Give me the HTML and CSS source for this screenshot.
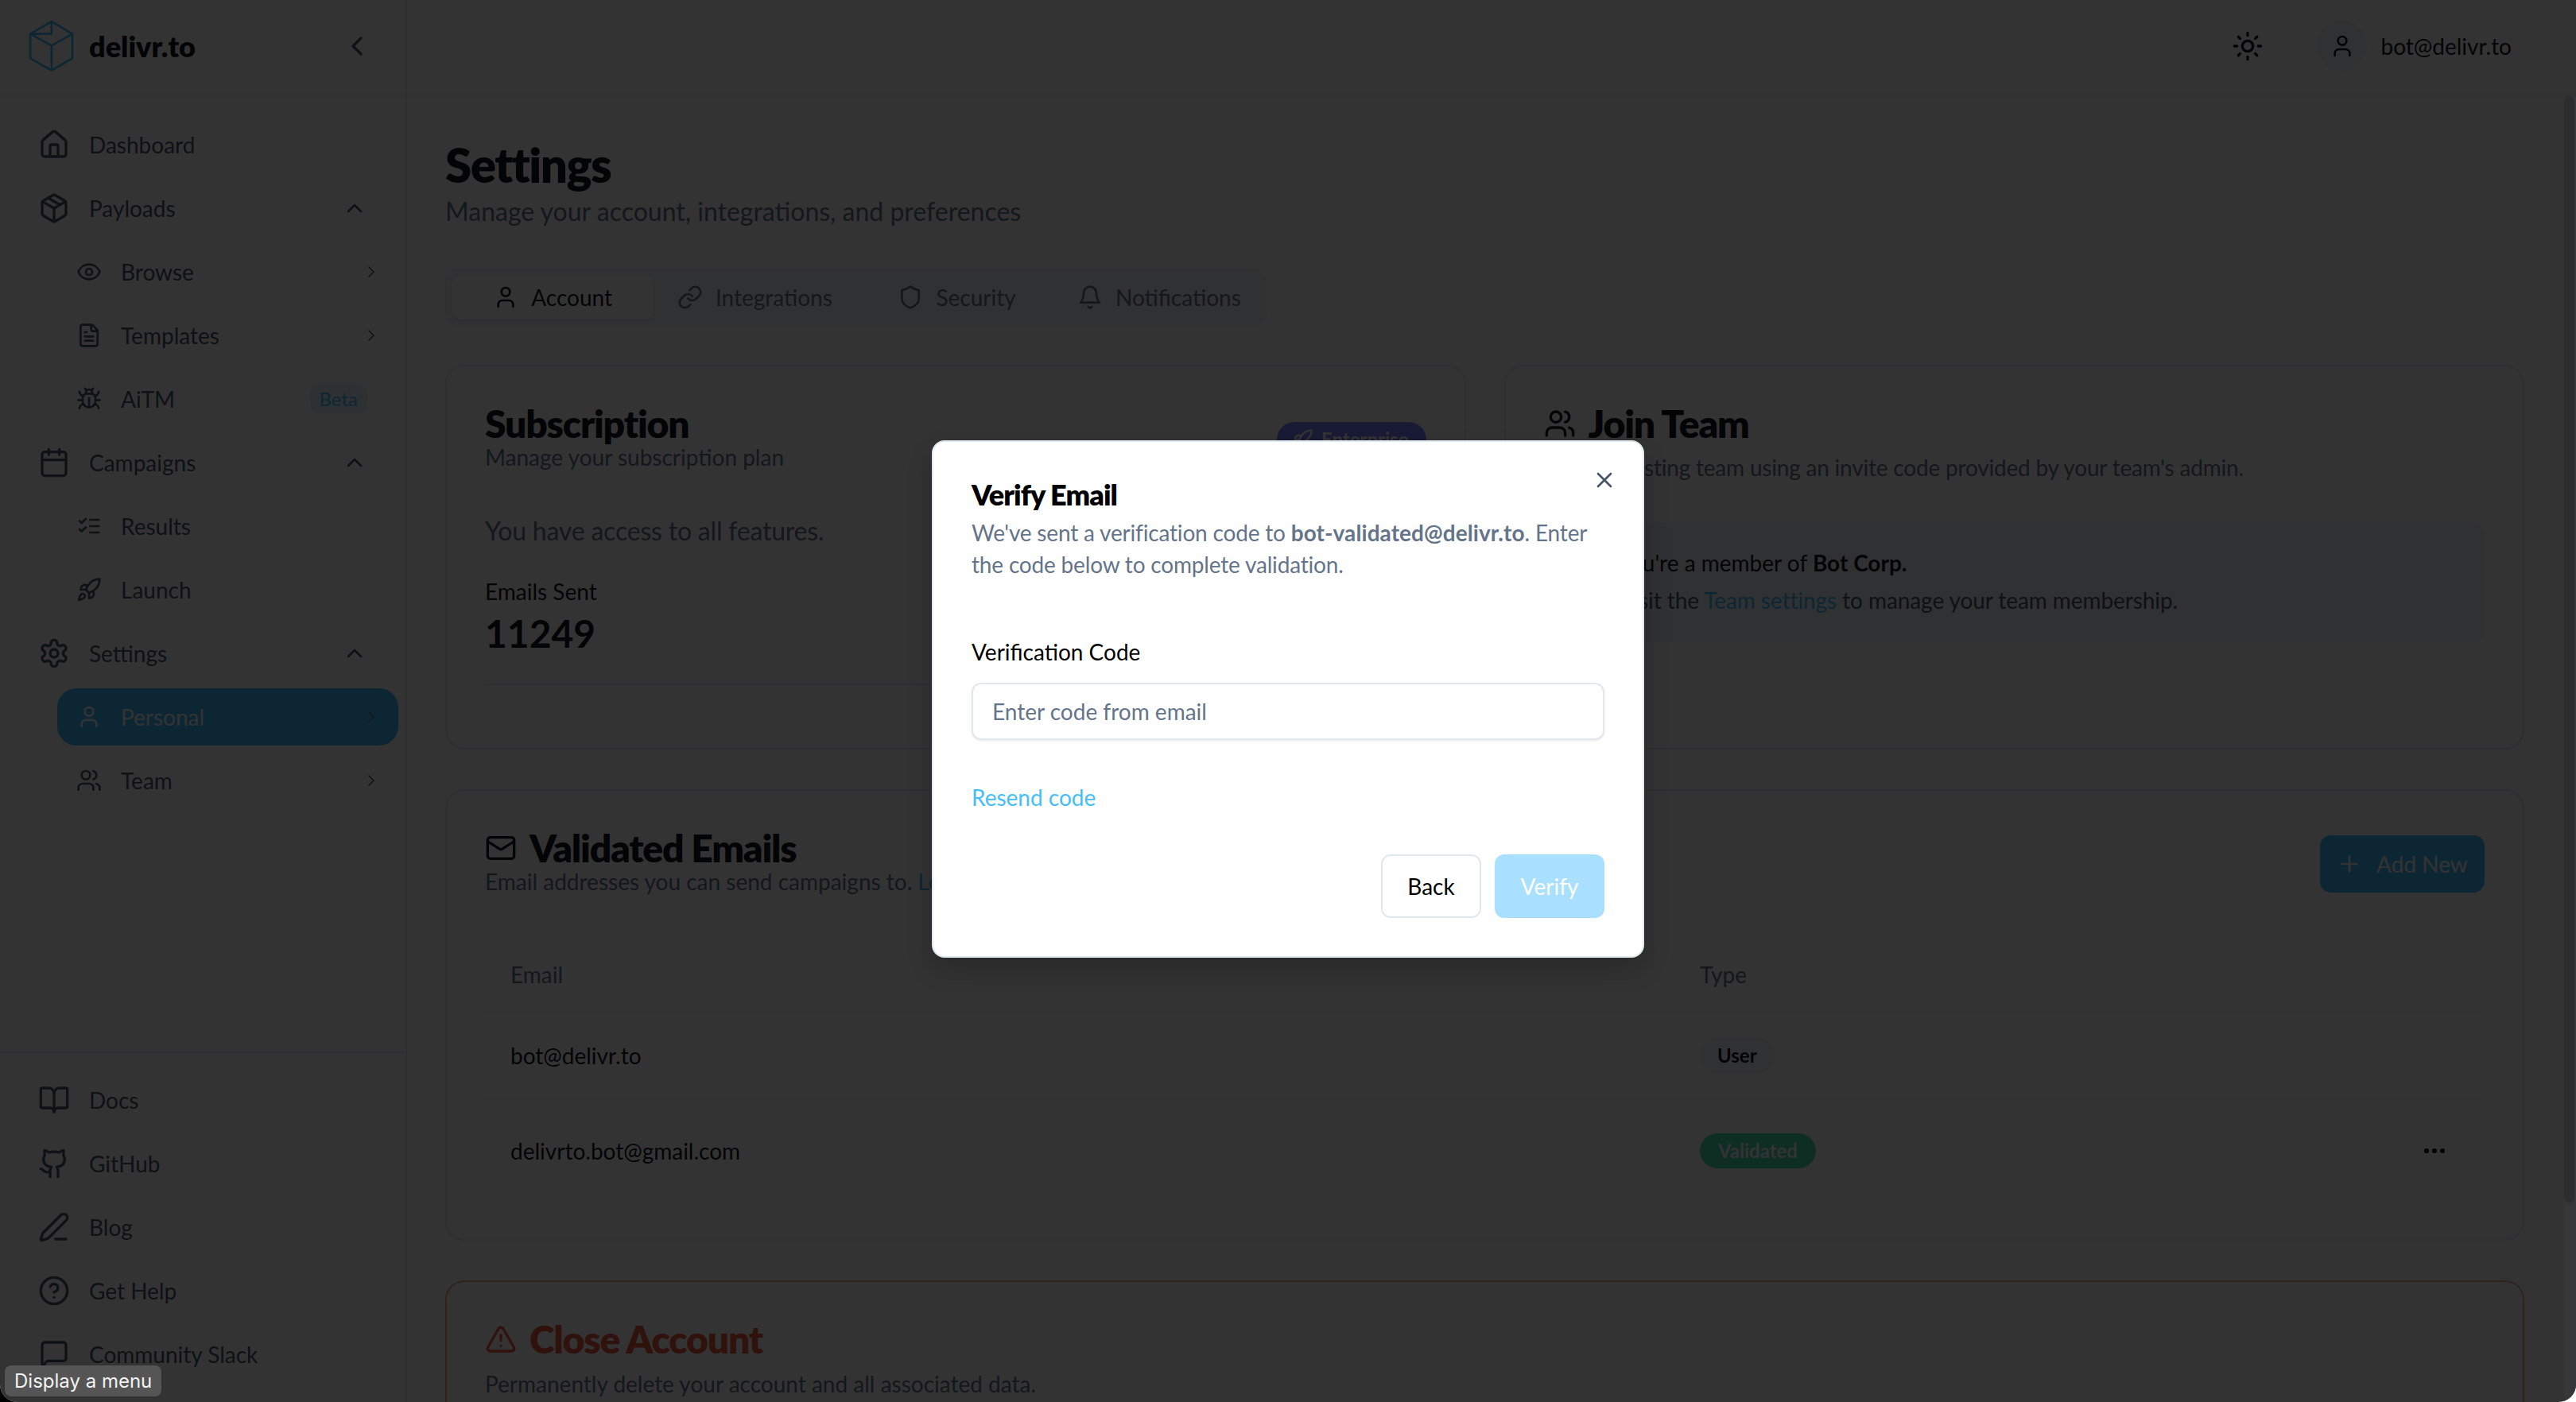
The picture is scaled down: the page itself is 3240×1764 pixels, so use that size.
FILE: index.html
```html
<!DOCTYPE html>
<html lang="en">
<head>
    <meta charset="UTF-8">
    <meta name="viewport" content="width=device-width, initial-scale=1.0">
    <title>Settings - delivr.to</title>
    <link rel="stylesheet" href="styles.css">
</head>
<body>
    <!-- Icon sprite -->
    <svg class="sprite" xmlns="http://www.w3.org/2000/svg">
        <symbol id="i-home" viewBox="0 0 24 24"><path d="M15 21v-8a1 1 0 0 0-1-1h-4a1 1 0 0 0-1 1v8"/><path d="M3 10a2 2 0 0 1 .709-1.528l7-5.999a2 2 0 0 1 2.582 0l7 5.999A2 2 0 0 1 21 10v9a2 2 0 0 1-2 2H5a2 2 0 0 1-2-2z"/></symbol>
        <symbol id="i-package" viewBox="0 0 24 24"><path d="M11 21.73a2 2 0 0 0 2 0l7-4A2 2 0 0 0 21 16V8a2 2 0 0 0-1-1.73l-7-4a2 2 0 0 0-2 0l-7 4A2 2 0 0 0 3 8v8a2 2 0 0 0 1 1.73z"/><path d="M12 22V12"/><path d="m3.3 7 8.7 5 8.7-5"/><path d="m7.5 4.27 9 5.15"/></symbol>
        <symbol id="i-eye" viewBox="0 0 24 24"><path d="M2.062 12.348a1 1 0 0 1 0-.696 10.75 10.75 0 0 1 19.876 0 1 1 0 0 1 0 .696 10.75 10.75 0 0 1-19.876 0"/><circle cx="12" cy="12" r="3"/></symbol>
        <symbol id="i-file" viewBox="0 0 24 24"><path d="M15 2H6a2 2 0 0 0-2 2v16a2 2 0 0 0 2 2h12a2 2 0 0 0 2-2V7Z"/><path d="M14 2v4a2 2 0 0 0 2 2h4"/><path d="M10 9H8"/><path d="M16 13H8"/><path d="M16 17H8"/></symbol>
        <symbol id="i-bug" viewBox="0 0 24 24"><path d="m8 2 1.88 1.88"/><path d="M14.12 3.88 16 2"/><path d="M9 7.13v-1a3.003 3.003 0 1 1 6 0v1"/><path d="M12 20c-3.3 0-6-2.7-6-6v-3a4 4 0 0 1 4-4h4a4 4 0 0 1 4 4v3c0 3.3-2.7 6-6 6"/><path d="M12 20v-9"/><path d="M6.53 9C4.6 8.8 3 7.1 3 5"/><path d="M6 13H2"/><path d="M3 21c0-2.1 1.7-3.9 3.8-4"/><path d="M20.97 5c0 2.1-1.6 3.8-3.5 4"/><path d="M22 13h-4"/><path d="M17.2 17c2.1.1 3.8 1.9 3.8 4"/></symbol>
        <symbol id="i-calendar" viewBox="0 0 24 24"><path d="M8 2v4"/><path d="M16 2v4"/><rect x="3" y="4" width="18" height="18" rx="2"/><path d="M3 10h18"/></symbol>
        <symbol id="i-checks" viewBox="0 0 24 24"><path d="m3 7 2 2 4-4"/><path d="m3 15 2 2 4-4"/><path d="M13 6h8"/><path d="M13 12h8"/><path d="M13 18h8"/></symbol>
        <symbol id="i-rocket" viewBox="0 0 24 24"><path d="M4.5 16.5c-1.5 1.26-2 5-2 5s3.74-.5 5-2c.71-.84.7-2.13-.09-2.91a2.18 2.18 0 0 0-2.91-.09z"/><path d="m12 15-3-3a22 22 0 0 1 2-3.95A12.88 12.88 0 0 1 22 2c0 2.72-.78 7.5-6 11a22.35 22.35 0 0 1-4 2z"/><path d="M9 12H4s.55-3.03 2-4c1.62-1.08 5 0 5 0"/><path d="M12 15v5s3.03-.55 4-2c1.08-1.62 0-5 0-5"/></symbol>
        <symbol id="i-settings" viewBox="0 0 24 24"><path d="M12.22 2h-.44a2 2 0 0 0-2 2v.18a2 2 0 0 1-1 1.73l-.43.25a2 2 0 0 1-2 0l-.15-.08a2 2 0 0 0-2.73.73l-.22.38a2 2 0 0 0 .73 2.73l.15.1a2 2 0 0 1 1 1.72v.51a2 2 0 0 1-1 1.74l-.15.09a2 2 0 0 0-.73 2.73l.22.38a2 2 0 0 0 2.73.73l.15-.08a2 2 0 0 1 2 0l.43.25a2 2 0 0 1 1 1.73V20a2 2 0 0 0 2 2h.44a2 2 0 0 0 2-2v-.18a2 2 0 0 1 1-1.73l.43-.25a2 2 0 0 1 2 0l.15.08a2 2 0 0 0 2.73-.73l.22-.39a2 2 0 0 0-.73-2.73l-.15-.08a2 2 0 0 1-1-1.74v-.5a2 2 0 0 1 1-1.74l.15-.09a2 2 0 0 0 .73-2.73l-.22-.38a2 2 0 0 0-2.73-.73l-.15.08a2 2 0 0 1-2 0l-.43-.25a2 2 0 0 1-1-1.73V4a2 2 0 0 0-2-2z"/><circle cx="12" cy="12" r="3"/></symbol>
        <symbol id="i-user" viewBox="0 0 24 24"><path d="M19 21v-2a4 4 0 0 0-4-4H9a4 4 0 0 0-4 4v2"/><circle cx="12" cy="7" r="4"/></symbol>
        <symbol id="i-users" viewBox="0 0 24 24"><path d="M16 21v-2a4 4 0 0 0-4-4H6a4 4 0 0 0-4 4v2"/><circle cx="9" cy="7" r="4"/><path d="M22 21v-2a4 4 0 0 0-3-3.87"/><path d="M16 3.13a4 4 0 0 1 0 7.75"/></symbol>
        <symbol id="i-book" viewBox="0 0 24 24"><path d="M12 7v14"/><path d="M3 18a1 1 0 0 1-1-1V4a1 1 0 0 1 1-1h5a4 4 0 0 1 4 4 4 4 0 0 1 4-4h5a1 1 0 0 1 1 1v13a1 1 0 0 1-1 1h-6a3 3 0 0 0-3 3 3 3 0 0 0-3-3z"/></symbol>
        <symbol id="i-github" viewBox="0 0 24 24"><path d="M15 22v-4a4.8 4.8 0 0 0-1-3.5c3 0 6-2 6-5.5.08-1.25-.27-2.48-1-3.5.28-1.15.28-2.35 0-3.5 0 0-1 0-3 1.5-2.64-.5-5.36-.5-8 0C6 2 5 2 5 2c-.3 1.15-.3 2.35 0 3.5A5.403 5.403 0 0 0 4 9c0 3.5 3 5.5 6 5.5-.39.49-.68 1.05-.85 1.65-.17.6-.22 1.23-.15 1.85v4"/><path d="M9 18c-4.51 2-5-2-7-2"/></symbol>
        <symbol id="i-pen" viewBox="0 0 24 24"><path d="M13 21h8"/><path d="M21.174 6.812a1 1 0 0 0-3.986-3.987L3.842 16.174a2 2 0 0 0-.5.83l-1.321 4.352a.5.5 0 0 0 .623.622l4.353-1.32a2 2 0 0 0 .83-.497z"/></symbol>
        <symbol id="i-help" viewBox="0 0 24 24"><circle cx="12" cy="12" r="10"/><path d="M9.09 9a3 3 0 0 1 5.83 1c0 2-3 3-3 3"/><path d="M12 17h.01"/></symbol>
        <symbol id="i-message" viewBox="0 0 24 24"><path d="M21 15a2 2 0 0 1-2 2H7l-4 4V5a2 2 0 0 1 2-2h14a2 2 0 0 1 2 2z"/></symbol>
        <symbol id="i-sun" viewBox="0 0 24 24"><circle cx="12" cy="12" r="4"/><path d="M12 2v2"/><path d="M12 20v2"/><path d="m4.93 4.93 1.41 1.41"/><path d="m17.66 17.66 1.41 1.41"/><path d="M2 12h2"/><path d="M20 12h2"/><path d="m6.34 17.66-1.41 1.41"/><path d="m19.07 4.93-1.41 1.41"/></symbol>
        <symbol id="i-link" viewBox="0 0 24 24"><path d="M10 13a5 5 0 0 0 7.54.54l3-3a5 5 0 0 0-7.07-7.07l-1.72 1.71"/><path d="M14 11a5 5 0 0 0-7.54-.54l-3 3a5 5 0 0 0 7.07 7.07l1.71-1.71"/></symbol>
        <symbol id="i-shield" viewBox="0 0 24 24"><path d="M20 13c0 5-3.5 7.5-7.66 8.95a1 1 0 0 1-.67-.01C7.5 20.5 4 18 4 13V6a1 1 0 0 1 1-1c2 0 4.5-1.2 6.24-2.72a1.17 1.17 0 0 1 1.52 0C14.51 3.81 17 5 19 5a1 1 0 0 1 1 1z"/></symbol>
        <symbol id="i-bell" viewBox="0 0 24 24"><path d="M6 8a6 6 0 0 1 12 0c0 7 3 9 3 9H3s3-2 3-9"/><path d="M10.3 21a1.94 1.94 0 0 0 3.4 0"/></symbol>
        <symbol id="i-mail" viewBox="0 0 24 24"><rect x="2" y="4" width="20" height="16" rx="2"/><path d="m22 7-8.97 5.7a1.94 1.94 0 0 1-2.06 0L2 7"/></symbol>
        <symbol id="i-alert" viewBox="0 0 24 24"><path d="m21.73 18-8-14a2 2 0 0 0-3.48 0l-8 14A2 2 0 0 0 4 21h16a2 2 0 0 0 1.73-3"/><path d="M12 9v4"/><path d="M12 17h.01"/></symbol>
        <symbol id="i-plus" viewBox="0 0 24 24"><path d="M5 12h14"/><path d="M12 5v14"/></symbol>
        <symbol id="i-x" viewBox="0 0 24 24"><path d="M18 6 6 18"/><path d="m6 6 12 12"/></symbol>
        <symbol id="i-up" viewBox="0 0 24 24"><path d="m18 15-6-6-6 6"/></symbol>
        <symbol id="i-left" viewBox="0 0 24 24"><path d="m15 18-6-6 6-6"/></symbol>
        <symbol id="i-right" viewBox="0 0 24 24"><path d="m9 18 6-6-6-6"/></symbol>
    </svg>

    <div class="app">
        <aside class="sidebar">
            <div class="brand">
                <svg class="logo" viewBox="16 16 170 196"><path d="M102 22 180 68V160L102 205 22 160V68Z"/><path d="M22 68 102 112 180 68"/><path d="M102 112V205"/><path d="M102 22V68H22"/></svg>
                <span class="brand-name">delivr.to</span>
                <svg class="icon collapse"><use href="#i-left"/></svg>
            </div>
            <nav class="nav">
                <a class="nav-item"><svg class="icon"><use href="#i-home"/></svg><span>Dashboard</span></a>
                <a class="nav-item"><svg class="icon"><use href="#i-package"/></svg><span>Payloads</span><svg class="icon toggle"><use href="#i-up"/></svg></a>
                <div class="sub-nav">
                    <a class="sub-item"><svg class="icon"><use href="#i-eye"/></svg><span>Browse</span><svg class="icon arrow"><use href="#i-right"/></svg></a>
                    <a class="sub-item"><svg class="icon"><use href="#i-file"/></svg><span>Templates</span><svg class="icon arrow"><use href="#i-right"/></svg></a>
                    <a class="sub-item"><svg class="icon"><use href="#i-bug"/></svg><span>AiTM</span><em class="beta">Beta</em></a>
                </div>
                <a class="nav-item"><svg class="icon"><use href="#i-calendar"/></svg><span>Campaigns</span><svg class="icon toggle"><use href="#i-up"/></svg></a>
                <div class="sub-nav">
                    <a class="sub-item"><svg class="icon"><use href="#i-checks"/></svg><span>Results</span></a>
                    <a class="sub-item"><svg class="icon"><use href="#i-rocket"/></svg><span>Launch</span></a>
                </div>
                <a class="nav-item"><svg class="icon"><use href="#i-settings"/></svg><span>Settings</span><svg class="icon toggle"><use href="#i-up"/></svg></a>
                <div class="sub-nav">
                    <a class="sub-item active"><svg class="icon"><use href="#i-user"/></svg><span>Personal</span><svg class="icon arrow"><use href="#i-right"/></svg></a>
                    <a class="sub-item"><svg class="icon"><use href="#i-users"/></svg><span>Team</span><svg class="icon arrow"><use href="#i-right"/></svg></a>
                </div>
            </nav>
            <nav class="nav nav-bottom">
                <a class="nav-item"><svg class="icon"><use href="#i-book"/></svg><span>Docs</span></a>
                <a class="nav-item"><svg class="icon"><use href="#i-github"/></svg><span>GitHub</span></a>
                <a class="nav-item"><svg class="icon"><use href="#i-pen"/></svg><span>Blog</span></a>
                <a class="nav-item"><svg class="icon"><use href="#i-help"/></svg><span>Get Help</span></a>
                <a class="nav-item"><svg class="icon"><use href="#i-message"/></svg><span>Community Slack</span></a>
            </nav>
        </aside>

        <main class="main">
            <header class="topbar">
                <svg class="icon theme"><use href="#i-sun"/></svg>
                <span class="avatar"><svg class="icon"><use href="#i-user"/></svg></span>
                <span class="account">bot@delivr.to</span>
            </header>

            <div class="page">
                <h1>Settings</h1>
                <p class="page-sub">Manage your account, integrations, and preferences</p>

                <div class="tabs">
                    <a class="tab active"><svg class="icon"><use href="#i-user"/></svg>Account</a>
                    <a class="tab"><svg class="icon"><use href="#i-link"/></svg>Integrations</a>
                    <a class="tab"><svg class="icon"><use href="#i-shield"/></svg>Security</a>
                    <a class="tab"><svg class="icon"><use href="#i-bell"/></svg>Notifications</a>
                </div>

                <div class="card-row">
                    <section class="card">
                        <div class="card-head">
                            <div>
                                <h2>Subscription</h2>
                                <p class="muted card-sub">Manage your subscription plan</p>
                            </div>
                            <span class="plan"><svg class="icon"><use href="#i-rocket"/></svg>Enterprise</span>
                        </div>
                        <p class="plan-note">You have access to all features.</p>
                        <p class="stat-label">Emails Sent</p>
                        <p class="stat-value">11249</p>
                        <hr class="rule">
                    </section>

                    <section class="card">
                        <h2 class="with-icon"><svg class="icon"><use href="#i-users"/></svg>Join Team</h2>
                        <p class="muted join-sub">Join an existing team using an invite code provided by your team's admin.</p>
                        <div class="notice">
                            <p>You're a member of <b>Bot Corp.</b></p>
                            <p>Visit the <a class="link">Team settings</a> to manage your team membership.</p>
                        </div>
                    </section>
                </div>

                <section class="card emails">
                    <div class="emails-head">
                        <div>
                            <h2 class="with-icon"><svg class="icon"><use href="#i-mail"/></svg>Validated Emails</h2>
                            <p class="muted card-sub">Email addresses you can send campaigns to. <a class="link">Learn more</a></p>
                        </div>
                        <button class="add-btn"><svg class="icon"><use href="#i-plus"/></svg>Add New</button>
                    </div>
                    <div class="table">
                        <div class="row row-head"><span>Email</span><span>Type</span></div>
                        <div class="row"><span>bot@delivr.to</span><span><em class="pill pill-user">User</em></span></div>
                        <div class="row row-last"><span>delivrto.bot@gmail.com</span><span><em class="pill pill-ok">Validated</em></span><b class="dots"><i></i><i></i><i></i></b></div>
                    </div>
                </section>

                <section class="card danger">
                    <h2 class="with-icon"><svg class="icon"><use href="#i-alert"/></svg>Close Account</h2>
                    <p class="muted danger-sub">Permanently delete your account and all associated data.</p>
                </section>
            </div>
        </main>

        <!-- Modal -->
        <div class="overlay">
            <div class="modal">
                <svg class="icon modal-close"><use href="#i-x"/></svg>
                <h3>Verify Email</h3>
                <p class="modal-text">We've sent a verification code to <b>bot-validated@delivr.to</b>. Enter the code below to complete validation.</p>
                <label class="field-label" for="code">Verification Code</label>
                <input id="code" class="field" type="text" placeholder="Enter code from email">
                <a class="resend">Resend code</a>
                <div class="modal-actions">
                    <button class="btn-back">Back</button>
                    <button class="btn-verify">Verify</button>
                </div>
            </div>
        </div>

        <div class="scrollbar"><div class="scroll-thumb"></div></div>
        <div class="hint">Display a menu</div>
    </div>
</body>
</html>
```

FILE: styles.css
```css
* {
    margin: 0;
    padding: 0;
    box-sizing: border-box;
}

html, body {
    height: 100%;
}

body {
    font-family: 'Lato', 'Liberation Sans', sans-serif;
    font-size: 28px;
    line-height: 40px;
    color: #11181c;
    overflow: hidden;
    background: linear-gradient(to right, #000 50%, #fff 50%);
}

.sprite {
    display: none;
}

.icon {
    width: 40px;
    height: 40px;
    flex-shrink: 0;
    fill: none;
    stroke: currentColor;
    stroke-width: 2;
    stroke-linecap: round;
    stroke-linejoin: round;
}

.app {
    position: relative;
    display: flex;
    height: 100%;
    overflow: hidden;
    background-color: #fff;
    border-radius: 0 0 22px 22px;
}

/* Sidebar */
.sidebar {
    display: flex;
    flex-direction: column;
    width: 512px;
    flex-shrink: 0;
    border-right: 2px solid #e2e8f0;
    color: #475569;
}

.brand {
    display: flex;
    align-items: center;
    height: 121px;
    flex-shrink: 0;
    padding: 0 41px 4px 36px;
    border-bottom: 2px solid #e2e8f0;
}

.logo {
    width: 57px;
    height: 66px;
    fill: none;
    stroke: #44beff;
    stroke-width: 8;
    stroke-linejoin: round;
}

.brand-name {
    margin-left: 19px;
    font-size: 36px;
    font-weight: 800;
    color: #11181c;
}

.collapse {
    margin-left: auto;
}

.nav {
    display: flex;
    flex-direction: column;
    gap: 8px;
    flex: 1;
    padding: 25px 24px 0;
}

.nav-bottom {
    flex: none;
    padding: 23px 24px 24px;
    border-top: 2px solid #e2e8f0;
}

.nav-item {
    display: flex;
    align-items: center;
    gap: 24px;
    height: 72px;
    padding: 0 24px;
}

.toggle {
    width: 32px;
    height: 32px;
    margin-left: auto;
}

.sub-nav {
    display: flex;
    flex-direction: column;
    gap: 8px;
    margin: 0 -15px 0 48px;
}

.sub-item {
    display: flex;
    align-items: center;
    gap: 24px;
    height: 72px;
    padding: 0 24px;
    border-radius: 24px;
}

.sub-item .icon {
    width: 32px;
    height: 32px;
}

.sub-item .arrow {
    width: 24px;
    height: 24px;
    margin: 0 -2px 0 auto;
    stroke-width: 1.5;
}

.sub-item.active {
    background-color: #44beff;
    color: #fff;
}

.sub-item.active .arrow {
    color: #64748b;
}

.beta {
    margin: 0 15px 0 auto;
    padding: 0 12px;
    font-size: 24px;
    font-style: normal;
    line-height: 38px;
    color: #44beff;
    background-color: #e6f6ff;
    border-radius: 10px;
}

/* Main column */
.main {
    flex: 1;
    min-width: 0;
}

.topbar {
    display: flex;
    align-items: center;
    height: 121px;
    padding: 0 81px 4px 0;
    justify-content: flex-end;
    border-bottom: 2px solid #e2e8f0;
}

.theme {
    margin-right: 67px;
}

.avatar {
    display: flex;
    align-items: center;
    justify-content: center;
    width: 63px;
    height: 63px;
    margin-right: 17px;
    background-color: #f1f5f9;
    border-radius: 50%;
}

.avatar .icon {
    width: 32px;
    height: 32px;
}

.page {
    padding: 50px 65px 0 48px;
}

h1 {
    font-size: 60px;
    line-height: 72px;
    font-weight: 800;
    letter-spacing: -1.5px;
}

.page-sub {
    margin-top: -1px;
    font-size: 32px;
    line-height: 48px;
    color: #64748b;
}

.tabs {
    display: grid;
    grid-template-columns: repeat(4, 1fr);
    width: 1033px;
    height: 72px;
    margin-top: 48px;
    padding: 8px;
    background-color: #f1f5f9;
    border-radius: 16px;
}

.tab {
    display: flex;
    align-items: center;
    justify-content: center;
    gap: 16px;
    color: #64748b;
    border-radius: 12px;
}

.tab .icon {
    width: 32px;
    height: 32px;
}

.tab.active {
    color: #11181c;
    background-color: #fff;
    box-shadow: 0 2px 4px rgba(0, 0, 0, 0.1);
}

/* Cards */
.card-row {
    display: grid;
    grid-template-columns: 1fr 1fr;
    gap: 48px;
    margin-top: 49px;
}

.card {
    height: 484px;
    padding: 48px;
    border: 2px solid #e2e8f0;
    border-radius: 24px;
}

h2 {
    font-size: 48px;
    line-height: 48px;
    font-weight: 800;
    letter-spacing: -1.2px;
}

.with-icon {
    display: flex;
    align-items: center;
    gap: 16px;
}

.muted {
    color: #64748b;
}

.card-sub {
    margin: -2px 0 2px;
}

.card-head {
    display: flex;
    justify-content: space-between;
    align-items: flex-start;
}

.plan {
    display: flex;
    align-items: center;
    gap: 10px;
    height: 44px;
    margin-top: 22px;
    padding: 0 22px 0 18px;
    font-size: 24px;
    font-weight: 700;
    color: #fff;
    background-color: #7c82ff;
    border-radius: 22px;
}

.plan .icon {
    width: 28px;
    height: 28px;
}

.plan-note {
    margin-top: 47px;
    font-size: 32px;
    line-height: 48px;
    letter-spacing: -0.2px;
    color: #64748b;
}

.stat-label {
    margin-top: 32px;
}

.stat-value {
    font-size: 48px;
    line-height: 56px;
    font-weight: 700;
    margin-top: 5px;
}

.rule {
    margin-top: 35px;
    border: 0;
    border-top: 2px solid #e2e8f0;
}

.join-sub {
    margin-top: 11px;
    letter-spacing: -0.2px;
}

.notice {
    height: 151px;
    margin-top: 49px;
    padding: 31px 32px 0 94px;
    background-color: #f1f5f9;
    border-radius: 16px;
}

.notice p + p {
    margin-top: 7px;
    letter-spacing: -0.08px;
    color: #475569;
}

.link {
    color: #44beff;
}

/* Validated emails */
.emails {
    height: 568px;
    margin-top: 50px;
}

.emails-head {
    display: flex;
    justify-content: space-between;
    align-items: center;
}

.add-btn {
    display: flex;
    align-items: center;
    justify-content: center;
    gap: 18px;
    width: 207px;
    height: 72px;
    font-family: inherit;
    font-size: 28px;
    color: #fff;
    background-color: #44beff;
    border: 0;
    border-radius: 14px;
}

.add-btn .icon {
    width: 32px;
    height: 32px;
}

.table {
    margin-top: 48px;
}

.row {
    display: grid;
    grid-template-columns: 1496px 1fr auto;
    align-items: center;
    height: 110px;
    padding: 0 32px;
    border-bottom: 2px solid #f1f5f9;
}

.row-head {
    height: 95px;
    color: #64748b;
}

.row-last {
    height: 128px;
    border-bottom: 0;
}

.pill {
    display: inline-block;
    padding: 0 22px;
    font-size: 24px;
    font-style: normal;
    font-weight: 700;
    line-height: 44px;
    border-radius: 22px;
}

.pill-user {
    background-color: #f1f5f9;
}

.pill-ok {
    padding: 0 23px;
    color: #fff;
    background-color: #45e0b0;
}

.dots {
    display: flex;
    gap: 4px;
    margin-right: 18px;
}

.dots i {
    width: 6px;
    height: 6px;
    background-color: #000;
    border-radius: 50%;
}

.danger {
    height: 400px;
    margin-top: 50px;
    border-color: #f4a9a2;
}

.danger h2 {
    color: #f0593f;
}

.danger-sub {
    margin-top: 12px;
}

/* Modal */
.overlay {
    position: absolute;
    inset: 0;
    display: flex;
    align-items: center;
    justify-content: center;
    padding-bottom: 6px;
    background-color: rgba(0, 0, 0, 0.8);
}

.modal {
    position: relative;
    display: flex;
    flex-direction: column;
    width: 896px;
    height: 651px;
    padding: 46px 48px 48px;
    background-color: #fff;
    border: 2px solid #e2e8f0;
    border-radius: 16px;
    box-shadow: 0 16px 32px rgba(0, 0, 0, 0.2);
}

.modal-close {
    position: absolute;
    top: 32px;
    right: 32px;
    width: 32px;
    height: 32px;
    color: #475569;
}

h3 {
    font-size: 36px;
    line-height: 40px;
    font-weight: 800;
    letter-spacing: -0.9px;
    color: #000;
}

.modal-text {
    margin-top: 8px;
    letter-spacing: -0.18px;
    color: #64748b;
}

.modal-text b {
    letter-spacing: 0.08px;
}

.field-label {
    margin-top: 70px;
    color: #000;
}

.field {
    width: 100%;
    height: 72px;
    margin-top: 19px;
    padding: 0 24px;
    font-family: inherit;
    font-size: 28px;
    color: #11181c;
    border: 2px solid #e2e8f0;
    border-radius: 12px;
    box-shadow: 0 1px 3px rgba(0, 0, 0, 0.1);
}

.field::placeholder {
    color: #64748b;
    opacity: 1;
}

.resend {
    margin-top: 52px;
    color: #44beff;
}

.modal-actions {
    display: flex;
    justify-content: flex-end;
    gap: 17px;
    margin-top: 52px;
}

.modal-actions button {
    height: 80px;
    font-family: inherit;
    font-size: 28px;
    border-radius: 12px;
}

.btn-back {
    width: 126px;
    color: #000;
    background-color: #fff;
    border: 2px solid #e2e8f0;
}

.btn-verify {
    width: 138px;
    color: #fff;
    background-color: #a9dfff;
    border: 0;
}

/* Browser chrome on top of the page */
.scrollbar {
    position: absolute;
    top: 121px;
    right: 0;
    bottom: 0;
    width: 15px;
    background-color: #363738;
}

.scroll-thumb {
    height: 1392px;
    margin-right: 2px;
    background-color: #2c2d2e;
    border-radius: 7px;
}

.hint {
    position: absolute;
    left: 6px;
    bottom: 7px;
    padding: 0 12px;
    font-family: 'Inter', 'Liberation Sans', sans-serif;
    font-size: 24px;
    line-height: 39px;
    color: #f2f2f2;
    background-color: #555;
    border-radius: 8px;
}
```
